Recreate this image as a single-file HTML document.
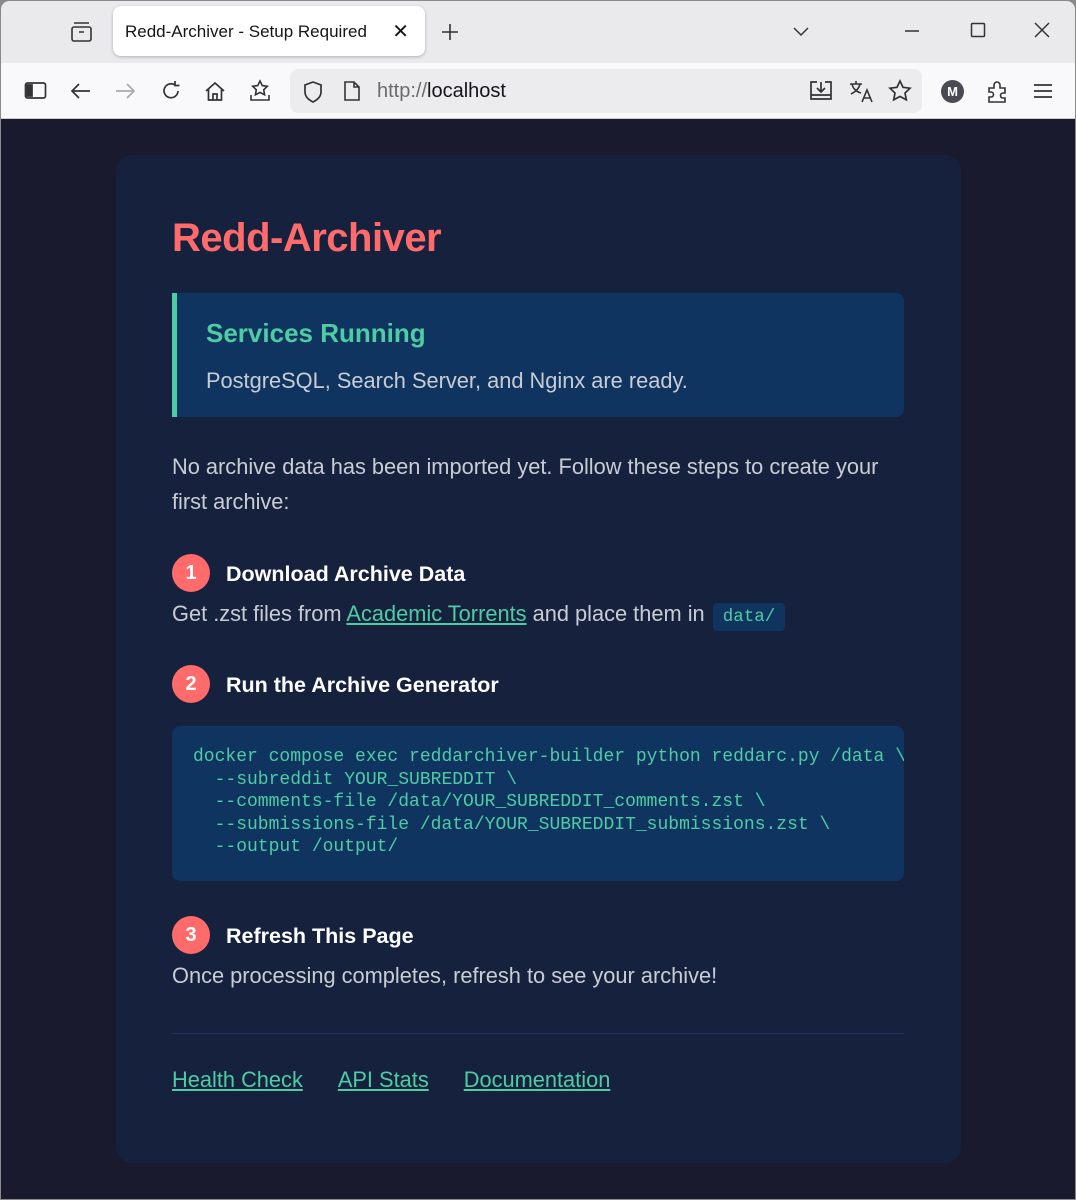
<!DOCTYPE html>
<html><head><meta charset="utf-8"><style>
*{margin:0;padding:0;box-sizing:border-box}
body{width:1076px;height:1200px;background:#8a8a8a;font-family:"Liberation Sans",sans-serif;position:relative;overflow:hidden}
.win{position:absolute;left:1px;top:1px;width:1074px;height:1198px;background:#1a1a2e;border-radius:8px 8px 0 0;overflow:hidden}
.tabbar{position:absolute;left:0;top:0;width:100%;height:62px;background:#eaeaed}
.toolbar{position:absolute;left:0;top:62px;width:100%;height:56px;background:#f9f9fb;border-bottom:1px solid #ccc}
.tab{position:absolute;left:112px;top:5px;width:312px;height:50px;background:#fff;border-radius:8px;box-shadow:0 1px 3px rgba(0,0,0,.25);font-size:17px;color:#15141a;padding:16px 12px}
.url{position:absolute;left:289px;top:6px;width:632px;height:44px;background:#ececef;border-radius:8px}
svg{position:absolute}
.abs{position:absolute;white-space:nowrap}
.card{position:absolute;left:115px;top:154px;width:845px;height:1008px;background:#16213e;border-radius:16px}
.t{color:#c9ccd3;font-size:21.8px}
.num{position:absolute;width:38px;height:38px;border-radius:50%;background:#ff6b6b;color:#fff;font-weight:bold;font-size:20px;text-align:center;line-height:38px}
.h3{color:#fff;font-weight:bold;font-size:21.5px}
a{color:#4ecca3;text-decoration:underline}
.mono{font-family:"Liberation Mono",monospace;color:#4ecca3;font-size:18px;line-height:22.6px}
</style></head><body><div class="win">
<div class="tabbar">
<svg style="left:69px;top:20px" width="24" height="22" viewBox="0 0 24 22" fill="none" stroke="#333" stroke-width="1.6"><rect x="2" y="6" width="19" height="14" rx="2"/><path d="M4 2h15M9 11h5"/></svg>
<div class="tab">Redd-Archiver - Setup Required<span style="position:absolute;right:16px;top:13px;font-size:20px">✕</span></div>
<svg style="left:440px;top:22px" width="18" height="18" viewBox="0 0 18 18" stroke="#333" stroke-width="1.6"><path d="M9 1v16M1 9h16"/></svg>
<svg style="left:791px;top:25px" width="18" height="12" viewBox="0 0 18 12" fill="none" stroke="#333" stroke-width="1.5"><path d="M2 2l7 7 7-7"/></svg>
<svg style="left:903px;top:28px" width="16" height="4"><path d="M1 2h14" stroke="#333" stroke-width="1.5"/></svg>
<svg style="left:969px;top:21px" width="16" height="16" fill="none" stroke="#333" stroke-width="1.5"><rect x="1.5" y="1.5" width="13" height="13" rx="1"/></svg>
<svg style="left:1033px;top:21px" width="16" height="16" stroke="#333" stroke-width="1.5"><path d="M1 1l14 14M15 1L1 15"/></svg>
</div>
<div class="toolbar">
<svg style="left:23px;top:18px" width="24" height="20" fill="none" stroke="#333" stroke-width="1.7"><rect x="1.5" y="2" width="20" height="15" rx="2"/><path d="M3 4h5v11H3z" fill="#333"/></svg>
<svg style="left:68px;top:18px" width="24" height="20" fill="none" stroke="#333" stroke-width="1.7"><path d="M21 10H3M10 3L3 10l7 7"/></svg>
<svg style="left:113px;top:18px" width="24" height="20" fill="none" stroke="#aaa" stroke-width="1.7"><path d="M2 10h18M13 3l7 7-7 7"/></svg>
<svg style="left:159px;top:17px" width="22" height="22" fill="none" stroke="#333" stroke-width="1.7"><path d="M18 11a7 7 0 1 1-3-6M15 1v4.5h4.5"/></svg>
<svg style="left:203px;top:17px" width="22" height="22" fill="none" stroke="#333" stroke-width="1.7"><path d="M2 11L11 3l9 8M4.5 9v11h13V9M9 20v-6h4v6"/></svg>
<svg style="left:248px;top:16px" width="22" height="24" fill="none" stroke="#333" stroke-width="1.6"><path d="M11 2l2.3 4.6 5 .7-3.6 3.5.9 5-4.6-2.4-4.6 2.4.9-5L3.7 7.3l5-.7z"/><path d="M2 16v5h18v-5"/></svg>
<div class="url">
<svg style="left:12px;top:11px" width="22" height="24" fill="none" stroke="#333" stroke-width="1.7"><path d="M11 2l8 3v7c0 5-4 8-8 10-4-2-8-5-8-10V5z"/></svg>
<svg style="left:53px;top:11px" width="18" height="22" fill="none" stroke="#333" stroke-width="1.6"><path d="M2 2h9l5 5v13H2zM11 2v5h5"/></svg>
<div class="abs" style="left:87px;top:11px;font-size:20px;color:#6b6b6b">http://<span style="color:#15141a">localhost</span></div>
<svg style="left:519px;top:10px" width="24" height="24" fill="none" stroke="#333" stroke-width="1.7"><path d="M8 3H2v17h20V3h-6M2 16h20M12 3v10M8 9l4 4 4-4"/></svg>
<svg style="left:558px;top:10px" width="26" height="26" fill="none" stroke="#333" stroke-width="1.6"><path d="M2 5h12M8 2v3M4 5c1 5 5 8 9 9M12 5c-1 5-5 8-9 10M14 23l5-12 5 12M16 19h6"/></svg>
<svg style="left:598px;top:10px" width="24" height="24" fill="none" stroke="#333" stroke-width="1.7"><path d="M12 2l3 6.3 7 .9-5 4.8 1.3 6.8L12 17.5l-6.3 3.3L7 14 2 9.2l7-.9z"/></svg>
</div>
<div class="abs" style="left:940px;top:17px;width:23px;height:23px;border-radius:50%;background:#4a4a55;color:#fff;font-size:13px;font-weight:bold;text-align:center;line-height:23px">M</div>
<svg style="left:985px;top:16px" width="24" height="26" fill="none" stroke="#333" stroke-width="1.6"><path d="M3 9h5V6a3 3 0 0 1 6 0v3h5v5h-2a2.5 2.5 0 0 0 0 5h2v4H3v-5h2a2.5 2.5 0 0 0 0-5H3z"/></svg>
<svg style="left:1032px;top:19px" width="20" height="18" stroke="#333" stroke-width="1.7"><path d="M1 3h18M1 9h18M1 15h18"/></svg>
</div>

<div class="card">
<div class="abs" style="left:56px;top:61px;font-size:40px;font-weight:bold;color:#ff6b6b;letter-spacing:-0.5px">Redd-Archiver</div>
<div class="abs" style="left:56px;top:138px;width:732px;height:124px;background:#0f3460;border-left:5px solid #4ecca3;border-radius:0 8px 8px 0"></div>
<div class="abs" style="left:90px;top:163px;font-size:26px;font-weight:bold;color:#4ecca3">Services Running</div>
<div class="abs t" style="left:90px;top:213px">PostgreSQL, Search Server, and Nginx are ready.</div>
<div class="abs t" style="left:56px;top:299px">No archive data has been imported yet. Follow these steps to create your</div>
<div class="abs t" style="left:56px;top:334px">first archive:</div>

<div class="num" style="left:56px;top:399px">1</div>
<div class="abs h3" style="left:110px;top:407px">Download Archive Data</div>
<div class="abs t" style="left:56px;top:446px">Get .zst files from <a>Academic Torrents</a> and place them in <span class="mono" style="background:#0f3460;padding:4px 10px;border-radius:4px;font-size:17.5px;margin-left:2px">data/</span></div>

<div class="num" style="left:56px;top:510px">2</div>
<div class="abs h3" style="left:110px;top:518px">Run the Archive Generator</div>
<div class="abs" style="left:56px;top:571px;width:732px;height:155px;background:#0f3460;border-radius:8px;overflow:hidden">
<pre class="mono" style="position:absolute;left:21px;top:20px">docker compose exec reddarchiver-builder python reddarc.py /data \
  --subreddit YOUR_SUBREDDIT \
  --comments-file /data/YOUR_SUBREDDIT_comments.zst \
  --submissions-file /data/YOUR_SUBREDDIT_submissions.zst \
  --output /output/</pre></div>

<div class="num" style="left:56px;top:761px">3</div>
<div class="abs h3" style="left:110px;top:769px">Refresh This Page</div>
<div class="abs t" style="left:56px;top:808px">Once processing completes, refresh to see your archive!</div>
<div class="abs" style="left:56px;top:878px;width:732px;height:1px;background:#22305a"></div>
<div class="abs t" style="left:56px;top:912px"><a>Health Check</a><a style="margin-left:35px">API Stats</a><a style="margin-left:35px">Documentation</a></div>
</div>
</div></body></html>
